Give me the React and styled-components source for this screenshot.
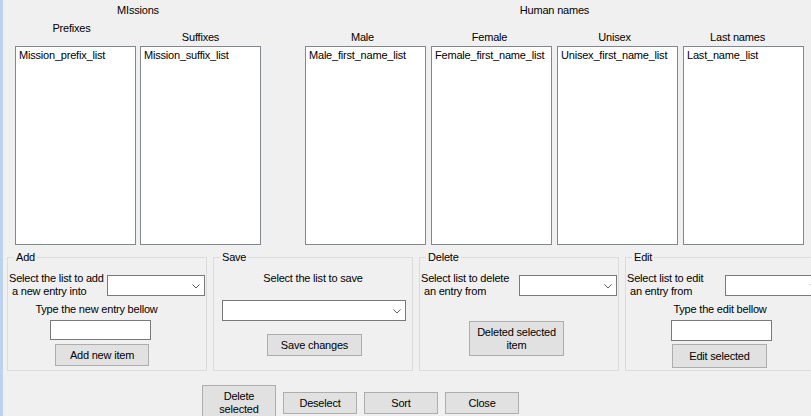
import React from "react";
import styled, { createGlobalStyle } from "styled-components";

const GlobalStyle = createGlobalStyle`
  body {
    margin: 0;
    background: #f0f0f0;
  }
`;

const Form = styled.div`
  width: 808px;
  height: 416px;
  overflow: hidden;
  border-left: 3px solid #bad3ee;
  background: #f0f0f0;
  color: #000;
  font-family: "Liberation Sans", Arial, sans-serif;
  font-size: 11px;
  letter-spacing: -0.2px;
  line-height: 13px;
`;

// Top part: the lists
const Lists = styled.div`
  display: flex;
  gap: 44px;
  padding: 4px 0 0 12px;
`;

const Section = styled.div`
  display: flex;
  flex-direction: column;
  width: ${(p) => p.width}px;
`;

const Title = styled.div`
  text-align: center;
  height: 13px;
  padding-left: ${(p) => p.shift || 0}px;
`;

const Columns = styled.div`
  display: flex;
  align-items: flex-end;
  gap: ${(p) => p.gap}px;
  margin-top: ${(p) => p.top}px;
`;

const Column = styled.div`
  display: flex;
  flex-direction: column;
  width: 121px;
`;

const ColumnLabel = styled.div`
  text-align: center;
  height: 13px;
  margin-bottom: ${(p) => p.below || 2}px;
  margin-left: ${(p) => p.shift || 0}px;
`;

const ListBox = styled.div`
  box-sizing: border-box;
  height: 199px;
  background: #fff;
  border: 1px solid #828790;
  padding: 2px 3px;
  white-space: nowrap;
  overflow: hidden;
`;

// Middle part: group boxes
const Groups = styled.div`
  display: flex;
  gap: 6px;
  margin-top: 6px;
  padding-left: 4px;
`;

const Group = styled.fieldset`
  flex: none;
  box-sizing: border-box;
  width: 200px;
  height: 120px;
  margin: 0;
  padding: 0;
  border: 1px solid #dcdcdc;
  min-width: 0;
`;

const Legend = styled.legend`
  margin-left: 6px;
  padding: 0 2px;
  line-height: 13px;
`;

const Row = styled.div`
  display: flex;
  align-items: center;
  margin-top: ${(p) => p.top || 0}px;
  padding-left: 1px;
`;

const FieldLabel = styled.div`
  width: 98px;
  flex: none;
  white-space: nowrap;
`;

const Indent = styled.span`
  padding-left: 3px;
`;

const Hint = styled.div`
  width: ${(p) => (p.width ? `${p.width}px` : "auto")};
  text-align: center;
  margin-top: ${(p) => p.top}px;
  white-space: nowrap;
`;

const ComboBox = styled.div`
  box-sizing: border-box;
  position: relative;
  width: ${(p) => p.width}px;
  height: 21px;
  flex: none;
  background: #fff;
  border: 1px solid #7a7a7a;
  margin: ${(p) => p.margin || 0};

  svg {
    position: absolute;
    right: 4px;
    top: 8px;
  }
`;

const TextBox = styled.div`
  box-sizing: border-box;
  width: 101px;
  height: ${(p) => p.height || 20}px;
  background: #fff;
  border: 1px solid #7a7a7a;
  margin: ${(p) => p.margin};
`;

const Button = styled.button`
  display: block;
  box-sizing: border-box;
  width: ${(p) => p.width || 95}px;
  height: ${(p) => p.height || 22}px;
  margin: ${(p) => p.margin || 0};
  padding: 0;
  background: #e1e1e1;
  border: 1px solid #adadad;
  border-radius: 0;
  color: #000;
  font: inherit;
  letter-spacing: inherit;
  line-height: 13px;
  text-align: center;
  flex: none;
`;

// Bottom buttons
const Actions = styled.div`
  display: flex;
  align-items: flex-start;
  gap: 7px;
  margin-top: 14px;
  padding-left: 199px;
`;

const Chevron = () => (
  <svg width="8" height="5" viewBox="0 0 8 5">
    <path d="M0.5 0.5 L4 4 L7.5 0.5" fill="none" stroke="#606060" strokeWidth="1" />
  </svg>
);

const Combo = (props) => (
  <ComboBox {...props}>
    <Chevron />
  </ComboBox>
);

const SelectLabel = ({ first, second }) => (
  <FieldLabel>
    <div>{first}</div>
    <div>
      <Indent>{second}</Indent>
    </div>
  </FieldLabel>
);

export default function App() {
  return (
    <>
      <GlobalStyle />
      <Form>
        <Lists>
          <Section width={246}>
            <Title>MIssions</Title>
            <Columns gap={4} top={5}>
              <Column>
                <ColumnLabel below={11} shift={-8}>
                  Prefixes
                </ColumnLabel>
                <ListBox>Mission_prefix_list</ListBox>
              </Column>
              <Column>
                <ColumnLabel>Suffixes</ColumnLabel>
                <ListBox>Mission_suffix_list</ListBox>
              </Column>
            </Columns>
          </Section>
          <Section width={499}>
            <Title>Human names</Title>
            <Columns gap={5} top={14}>
              <Column>
                <ColumnLabel shift={-6}>Male</ColumnLabel>
                <ListBox>Male_first_name_list</ListBox>
              </Column>
              <Column>
                <ColumnLabel shift={-4}>Female</ColumnLabel>
                <ListBox>Female_first_name_list</ListBox>
              </Column>
              <Column>
                <ColumnLabel shift={-6}>Unisex</ColumnLabel>
                <ListBox>Unisex_first_name_list</ListBox>
              </Column>
              <Column>
                <ColumnLabel shift={-12}>Last names</ColumnLabel>
                <ListBox>Last_name_list</ListBox>
              </Column>
            </Columns>
          </Section>
        </Lists>

        <Groups>
          <Group>
            <Legend>Add</Legend>
            <Row top={8}>
              <SelectLabel first="Select the list to add" second="a new entry into" />
              <Combo width={98} />
            </Row>
            <Hint top={5} width={177}>
              Type the new entry bellow
            </Hint>
            <TextBox margin="4px 0 0 42px" />
            <Button width={94} margin="4px 0 0 47px">
              Add new item
            </Button>
          </Group>

          <Group>
            <Legend>Save</Legend>
            <Hint top={8}>Select the list to save</Hint>
            <Combo width={184} margin="15px 0 0 8px" />
            <Button margin="13px 0 0 53px">Save changes</Button>
          </Group>

          <Group>
            <Legend>Delete</Legend>
            <Row top={8}>
              <SelectLabel first="Select list to delete" second="an entry from" />
              <Combo width={98} />
            </Row>
            <Button height={35} margin="23px 0 0 49px">
              Deleted selected
              <br />
              item
            </Button>
          </Group>

          <Group>
            <Legend>Edit</Legend>
            <Row top={8}>
              <SelectLabel first="Select list to edit" second="an entry from" />
              <Combo width={98} />
            </Row>
            <Hint top={5} width={188}>
              Type the edit bellow
            </Hint>
            <TextBox height={21} margin="4px 0 0 45px" />
            <Button height={24} margin="3px 0 0 46px">
              Edit selected
            </Button>
          </Group>
        </Groups>

        <Actions>
          <Button width={74} height={36}>
            Delete
            <br />
            selected
          </Button>
          <Button width={74} margin="7px 0 0 0">
            Deselect
          </Button>
          <Button width={74} margin="7px 0 0 0">
            Sort
          </Button>
          <Button width={74} margin="7px 0 0 0">
            Close
          </Button>
        </Actions>
      </Form>
    </>
  );
}
